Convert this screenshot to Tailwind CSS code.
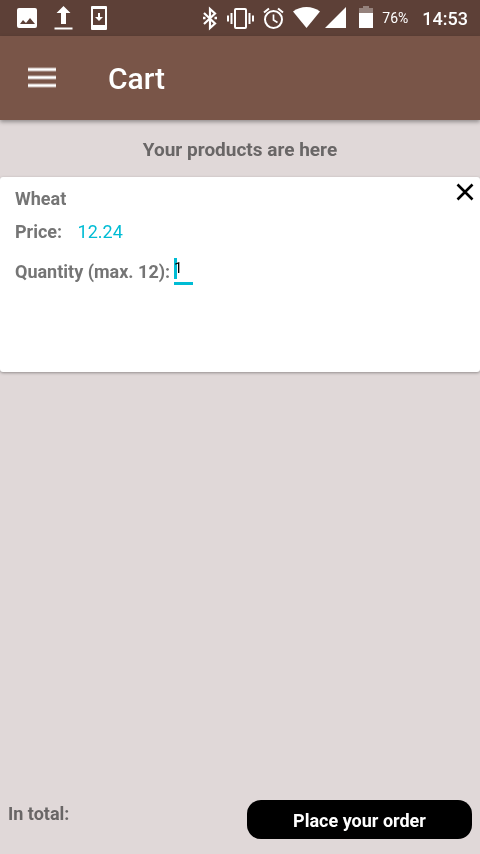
<!DOCTYPE html>
<html lang="en">
<head>
<meta charset="utf-8">
<meta name="viewport" content="width=device-width, initial-scale=1">
<title>Cart</title>
<script src="https://cdn.jsdelivr.net/npm/@tailwindcss/browser@4"></script>
</head>
<body class="flex min-h-screen flex-col bg-[#e0d8d8] font-[Roboto,sans-serif] text-lg leading-6 text-[#757575]">
  <div class="flex h-9 items-center bg-[#5d4037] pr-3 pl-[9px] text-white">
    <div class="flex">
      <svg class="h-9 w-9" viewBox="0 0 36 36" fill="currentColor"><path fill-rule="evenodd" d="M10 8h16a2 2 0 0 1 2 2v16a2 2 0 0 1-2 2H10a2 2 0 0 1-2-2V10a2 2 0 0 1 2-2zM11 24h15l-5-6-4 5-3-3z"/></svg>
      <svg class="h-9 w-9" viewBox="0 0 36 36" fill="currentColor"><path d="M18.500 6l7 7H21v11h-5V13h-4.500zM9.500 27.500h18v2h-18z"/></svg>
      <svg class="h-9 w-9" viewBox="0 0 36 36" fill="currentColor"><path fill-rule="evenodd" d="M11 6h14a1 1 0 0 1 1 1v22a1 1 0 0 1-1 1H11a1 1 0 0 1-1-1V7a1 1 0 0 1 1-1zM12 9v16h12V9zM17 13h2v4h3l-4 4-4-4h3z"/></svg>
    </div>
    <div class="ml-auto flex items-center">
      <svg class="h-9 w-[14px]" viewBox="0 0 14 36" fill="none" stroke="currentColor" stroke-width="2.200"><path d="M1 13l11 10.500-5 4.500V9l5 4.500L1 24"/><path d="M0 16.800h2.500v2.400H0zM11.500 16.800H14v2.400h-2.500z" fill="currentColor" stroke="none"/></svg>
      <svg class="ml-2.5 h-9 w-[27px]" viewBox="0 0 27 36" fill="none" stroke="currentColor" stroke-width="2"><rect x="8" y="9" width="11" height="19" rx="1"/><path d="M4.500 13v11M22.500 13v11M1 15.500v6M26 15.500v6"/></svg>
      <svg class="ml-[9px] h-9 w-[21px]" viewBox="0 0 21 36" fill="none" stroke="currentColor" stroke-width="2"><circle cx="10.500" cy="19.500" r="8.500"/><path d="M1 12.500l5-4M20 12.500l-5-4"/><path d="M10.500 14.500v5.500l4 2.500" stroke-width="1.700"/></svg>
      <svg class="ml-[9px] h-9 w-[27px]" viewBox="0 0 27 36" fill="currentColor"><path d="M13.500 28L0 11.500C7.500 5.500 19.500 5.500 27 11.500z"/></svg>
      <svg class="ml-[5px] h-9 w-[21px]" viewBox="0 0 21 36" fill="currentColor"><path d="M21 7v21H0z"/></svg>
      <svg class="ml-[13px] h-9 w-[14px]" viewBox="0 0 14 36" fill="currentColor"><path d="M4 6h6v2h4v5H0V8h4z" opacity=".35"/><path d="M0 13h14v15H0z"/></svg>
      <span class="ml-[9px] text-sm">76%</span>
      <span class="ml-3.5 pt-0.5 text-lg font-medium">14:53</span>
    </div>
  </div>
  <header class="flex h-21 items-center bg-[#795548] px-7 text-white shadow-[0_2px_4px_rgba(0,0,0,0.35)]">
    <button type="button" aria-label="Open menu" class="h-7 w-7"><svg class="h-7 w-7" viewBox="0 0 28 28" fill="none" stroke="currentColor"><path d="M0 5.500h28M0 13.500h28M0 21.500h28" stroke-width="4" opacity=".55"/><path d="M0 5.500h28M0 13.500h28M0 21.500h28" stroke-width="2"/></svg></button>
    <h1 class="ml-13 pt-0.5 text-3xl font-medium">Cart</h1>
  </header>
  <main class="flex grow flex-col">
    <h2 class="pt-[18px] pb-[15px] text-center text-[19px] font-bold leading-6 text-[#696666]">Your products are here</h2>
    <section class="relative h-[195px] rounded-[3px] bg-white px-[15px] pt-2.5 font-bold shadow-[0_1px_3px_rgba(0,0,0,0.35)]">
      <h3>Wheat</h3>
      <p class="mt-[9px]">Price: <span class="ml-[11px] font-normal text-[#00bcd4]">12.24</span></p>
      <div class="mt-[13px] flex items-start">
        <label for="quantity" class="pt-[3px]">Quantity (max. 12):</label>
        <div class="relative ml-1">
          <input id="quantity" type="text" inputmode="numeric" value="1" class="block h-7 w-[19px] border-b-3 border-[#00bcd4] pb-1 text-[15px] font-normal text-black outline-none">
          <span class="absolute top-px left-0 h-[21px] w-[3px] bg-[#00bcd4] mix-blend-multiply"></span>
        </div>
      </div>
      <button type="button" aria-label="Remove Wheat" class="absolute top-0 right-0 p-[5px]"><svg class="h-5 w-5" viewBox="0 0 20 20" fill="none" stroke="#000" stroke-width="2.600"><path d="M2.500 2.500l15 15M17.500 2.500l-15 15"/></svg></button>
    </section>
  </main>
  <footer class="flex items-start justify-between px-2 pb-[15px]">
    <p class="pt-0.5 font-bold text-[#696666]">In total:</p>
    <button type="button" class="h-[39px] w-[225px] rounded-[14px] bg-black pt-0.5 font-bold text-white">Place your order</button>
  </footer>
</body>
</html>
